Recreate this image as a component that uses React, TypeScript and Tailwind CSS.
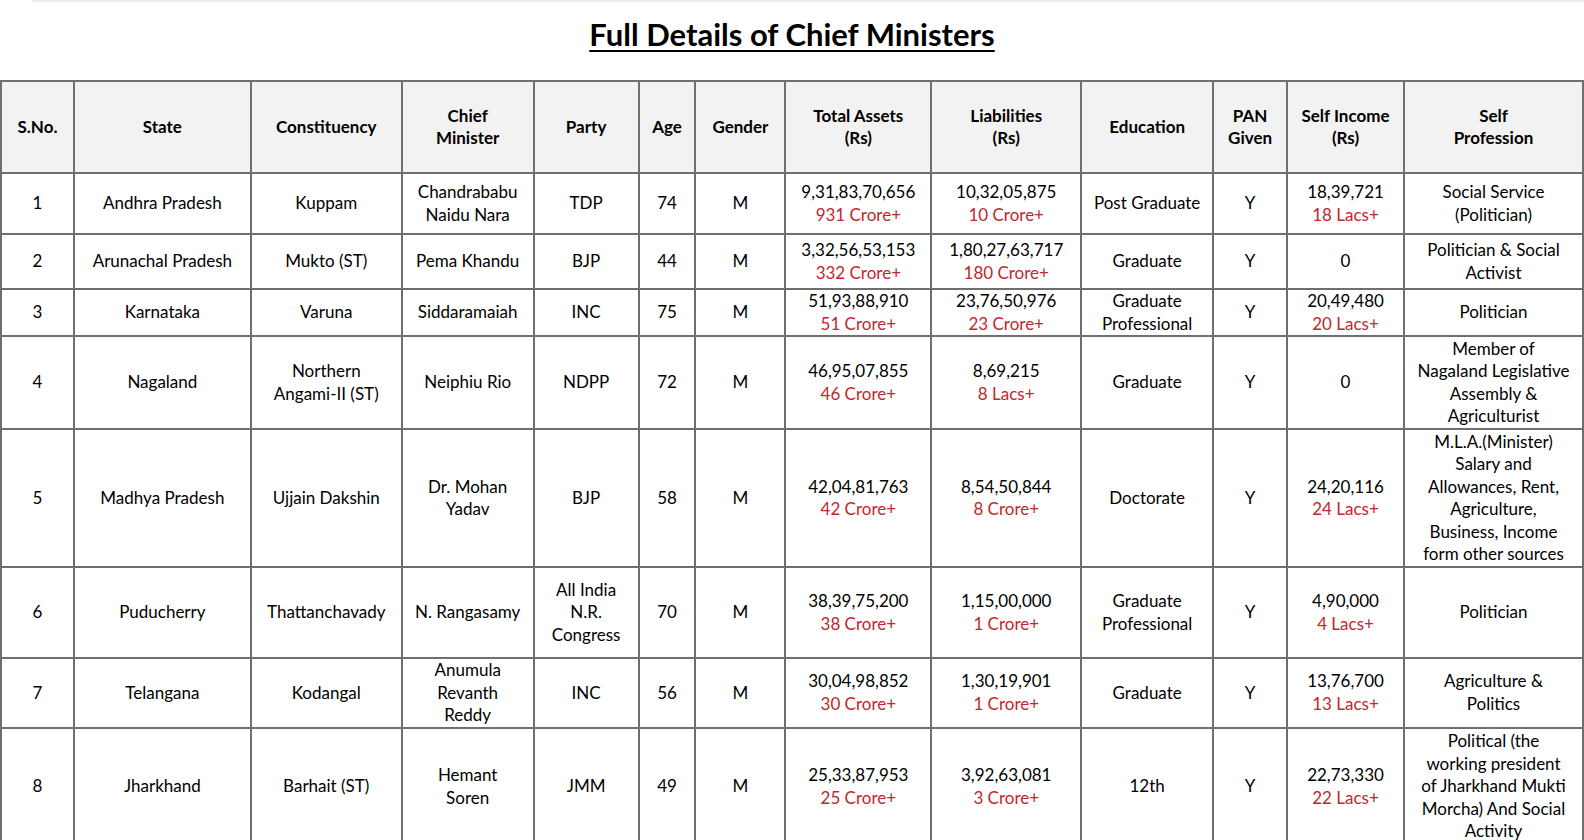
import React from "react";

type Row = {
  n: string;
  state: string;
  cons: React.ReactNode;
  cm: React.ReactNode;
  party: React.ReactNode;
  age: string;
  g: string;
  assets: [string, string];
  liab: [string, string];
  edu: React.ReactNode;
  pan: string;
  income: [string, string] | string;
  prof: React.ReactNode;
  h: string;
};

const rows: Row[] = [
  { n: "1", state: "Andhra Pradesh", cons: "Kuppam", cm: <>Chandrababu<br />Naidu Nara</>, party: "TDP", age: "74", g: "M", assets: ["9,31,83,70,656", "931 Crore+"], liab: ["10,32,05,875", "10 Crore+"], edu: "Post Graduate", pan: "Y", income: ["18,39,721", "18 Lacs+"], prof: <>Social Service<br />(Politician)</>, h: "h-[61px]" },
  { n: "2", state: "Arunachal Pradesh", cons: "Mukto (ST)", cm: "Pema Khandu", party: "BJP", age: "44", g: "M", assets: ["3,32,56,53,153", "332 Crore+"], liab: ["1,80,27,63,717", "180 Crore+"], edu: "Graduate", pan: "Y", income: "0", prof: <>Politician &amp; Social<br />Activist</>, h: "h-[55px]" },
  { n: "3", state: "Karnataka", cons: "Varuna", cm: "Siddaramaiah", party: "INC", age: "75", g: "M", assets: ["51,93,88,910", "51 Crore+"], liab: ["23,76,50,976", "23 Crore+"], edu: <>Graduate<br />Professional</>, pan: "Y", income: ["20,49,480", "20 Lacs+"], prof: "Politician", h: "h-[46px]" },
  { n: "4", state: "Nagaland", cons: <>Northern<br />Angami-II (ST)</>, cm: "Neiphiu Rio", party: "NDPP", age: "72", g: "M", assets: ["46,95,07,855", "46 Crore+"], liab: ["8,69,215", "8 Lacs+"], edu: "Graduate", pan: "Y", income: "0", prof: <>Member of<br />Nagaland Legislative<br />Assembly &amp;<br />Agriculturist</>, h: "h-[93px]" },
  { n: "5", state: "Madhya Pradesh", cons: "Ujjain Dakshin", cm: <>Dr. Mohan<br />Yadav</>, party: "BJP", age: "58", g: "M", assets: ["42,04,81,763", "42 Crore+"], liab: ["8,54,50,844", "8 Crore+"], edu: "Doctorate", pan: "Y", income: ["24,20,116", "24 Lacs+"], prof: <>M.L.A.(Minister)<br />Salary and<br />Allowances, Rent,<br />Agriculture,<br />Business, Income<br />form other sources</>, h: "h-[138px]" },
  { n: "6", state: "Puducherry", cons: "Thattanchavady", cm: "N. Rangasamy", party: <>All India<br />N.R.<br />Congress</>, age: "70", g: "M", assets: ["38,39,75,200", "38 Crore+"], liab: ["1,15,00,000", "1 Crore+"], edu: <>Graduate<br />Professional</>, pan: "Y", income: ["4,90,000", "4 Lacs+"], prof: "Politician", h: "h-[91px]" },
  { n: "7", state: "Telangana", cons: "Kodangal", cm: <>Anumula<br />Revanth<br />Reddy</>, party: "INC", age: "56", g: "M", assets: ["30,04,98,852", "30 Crore+"], liab: ["1,30,19,901", "1 Crore+"], edu: "Graduate", pan: "Y", income: ["13,76,700", "13 Lacs+"], prof: <>Agriculture &amp;<br />Politics</>, h: "h-[69px]" },
  { n: "8", state: "Jharkhand", cons: "Barhait (ST)", cm: <>Hemant<br />Soren</>, party: "JMM", age: "49", g: "M", assets: ["25,33,87,953", "25 Crore+"], liab: ["3,92,63,081", "3 Crore+"], edu: "12th", pan: "Y", income: ["22,73,330", "22 Lacs+"], prof: <>Political (the<br />working president<br />of Jharkhand Mukti<br />Morcha) And Social<br />Activity</>, h: "h-[118px]" },
];

const cell = "border-2 border-[#6f6f6f] text-center align-middle whitespace-nowrap px-0 py-0";
const dark = "border-2 border-[#6f6f6f] border-l-[#111111] text-center align-middle whitespace-nowrap px-0 py-0";

function Money({ v }: { v: [string, string] | string }) {
  if (typeof v === "string") return <>{v}</>;
  return (
    <>
      <div>{v[0]}</div>
      <div className="text-[#c1272d]">{v[1]}</div>
    </>
  );
}

export default function App() {
  return (
    <div className="w-[1584px] bg-white text-black" style={{ fontFamily: "Lato, 'Open Sans', sans-serif" }}>
      <div className="ml-[32px] h-[2px] bg-[#ececec]" />
      <div className="flex h-[78px] justify-center pt-[12px]">
        <h1 className="text-[31px] font-bold leading-[40px] underline decoration-[2px] underline-offset-[4px]">
          Full Details of Chief Ministers
        </h1>
      </div>
      <table className="table-fixed border-collapse text-[17px] leading-[22.5px]">
        <colgroup>
          <col className="w-[73px]" />
          <col className="w-[177px]" />
          <col className="w-[151px]" />
          <col className="w-[132px]" />
          <col className="w-[105px]" />
          <col className="w-[57px]" />
          <col className="w-[90px]" />
          <col className="w-[146px]" />
          <col className="w-[150px]" />
          <col className="w-[132px]" />
          <col className="w-[74px]" />
          <col className="w-[117px]" />
          <col className="w-[179px]" />
        </colgroup>
        <thead>
          <tr className="h-[92px] bg-[#f2f2f2] font-bold">
            <th className={cell}>S.No.</th>
            <th className={cell}>State</th>
            <th className={cell}>Constituency</th>
            <th className={cell}>Chief<br />Minister</th>
            <th className={cell}>Party</th>
            <th className={cell}>Age</th>
            <th className={cell}>Gender</th>
            <th className={dark}>Total Assets<br />(Rs)</th>
            <th className={cell}>Liabilities<br />(Rs)</th>
            <th className={cell}>Education</th>
            <th className={cell}>PAN<br />Given</th>
            <th className={cell}>Self Income<br />(Rs)</th>
            <th className={dark}>Self<br />Profession</th>
          </tr>
        </thead>
        <tbody>
          {rows.map((r) => (
            <tr key={r.n} className={r.h}>
              <td className={cell}>{r.n}</td>
              <td className={cell}>{r.state}</td>
              <td className={cell}>{r.cons}</td>
              <td className={cell}>{r.cm}</td>
              <td className={cell}>{r.party}</td>
              <td className={cell}>{r.age}</td>
              <td className={cell}>{r.g}</td>
              <td className={dark}><Money v={r.assets} /></td>
              <td className={cell}><Money v={r.liab} /></td>
              <td className={cell}>{r.edu}</td>
              <td className={cell}>{r.pan}</td>
              <td className={cell}><Money v={r.income} /></td>
              <td className={dark}>{r.prof}</td>
            </tr>
          ))}
        </tbody>
      </table>
    </div>
  );
}
